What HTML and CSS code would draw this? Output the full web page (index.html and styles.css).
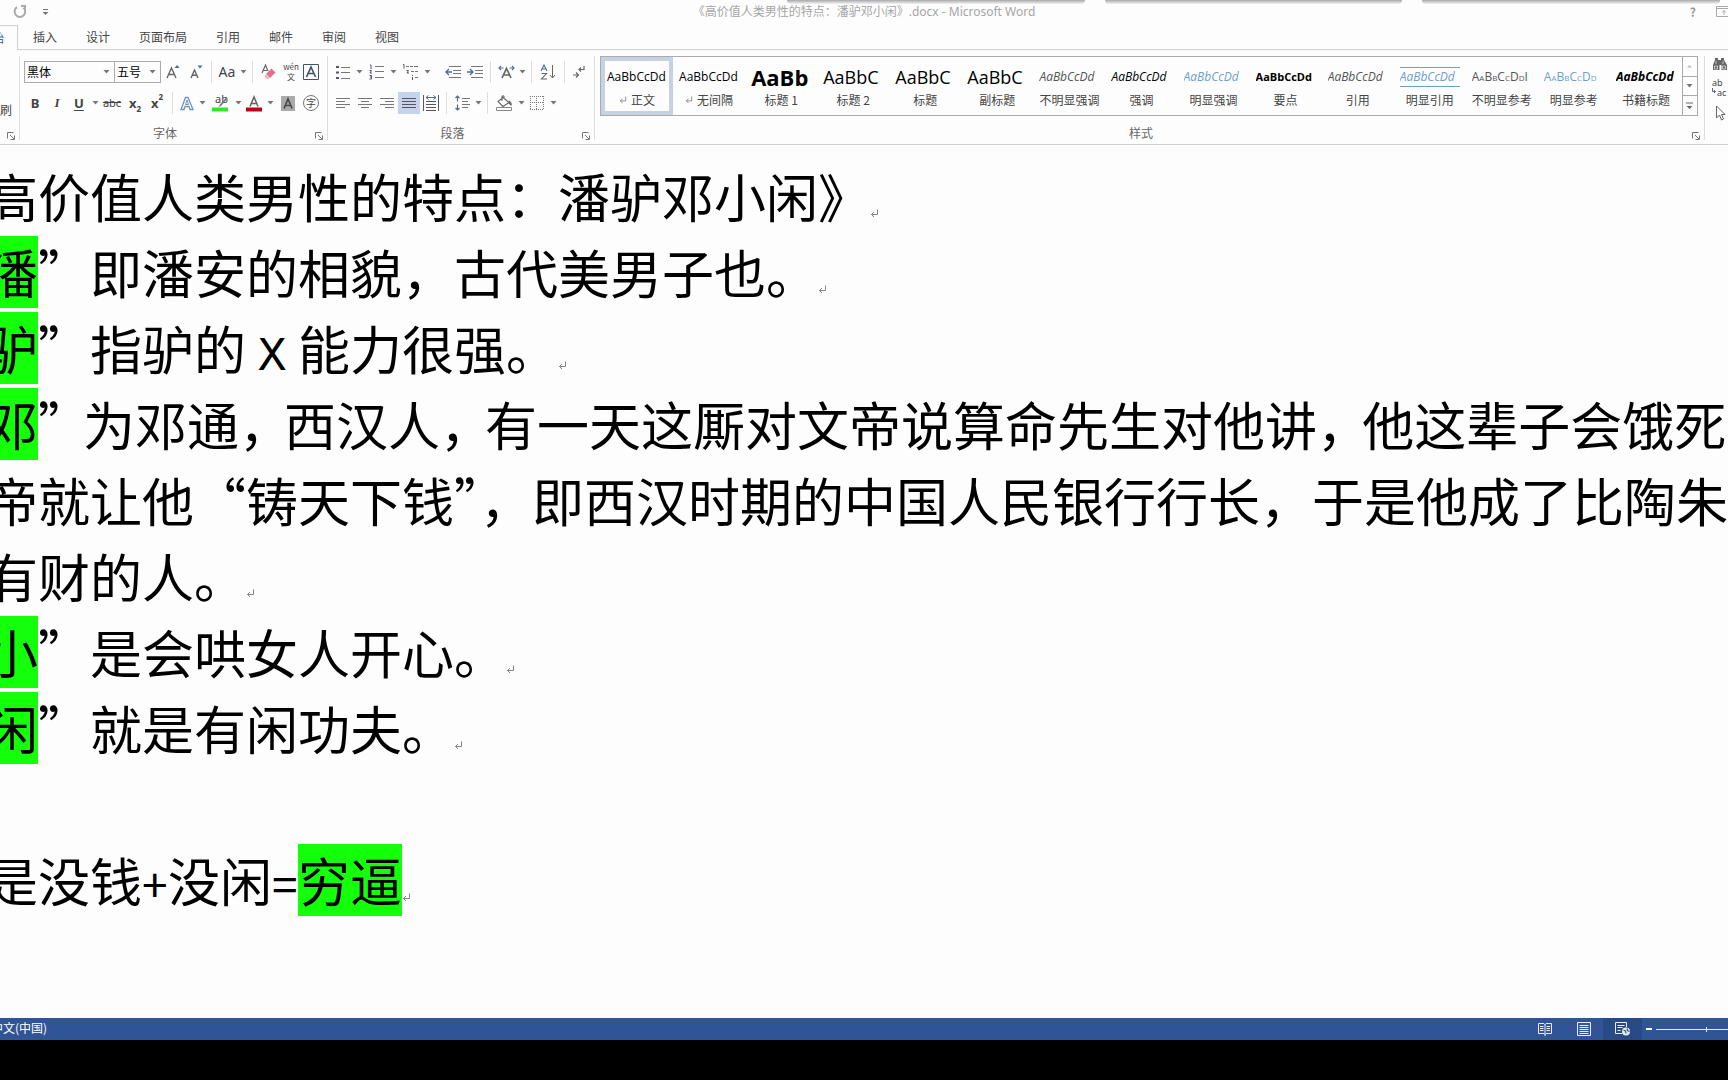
FILE: index.html
```html
<!DOCTYPE html>
<html lang="zh-CN">
<head>
<meta charset="utf-8">
<title>《高价值人类男性的特点：潘驴邓小闲》.docx - Microsoft Word</title>
<link rel="stylesheet" href="styles.css">
</head>
<body>
<svg class="defs" aria-hidden="true">
  <symbol id="caret" viewBox="0 0 7 4"><path d="M0.5 0h6L3.5 3.5z" fill="#777"/></symbol>
  <symbol id="launcher" viewBox="0 0 8 8"><path d="M0.5 6.500V.5H6.500M3 3l4 4M7.500 3.500v4h-4" fill="none" stroke="#777"/></symbol>
  <symbol id="enter" viewBox="0 0 9 9"><path d="M7.500 .5V5.500H1.500M4 3L1.500 5.500L4 8" fill="none" stroke="#777" stroke-width=".9"/></symbol>
</svg>

<header class="titlebar">
  <div class="edges"><i></i><i></i><i></i></div>
  <div class="quick">
    <button aria-label="重复"><svg width="16" height="16" viewBox="0 0 16 16"><path d="M5 3.200A5.300 5.300 0 1 0 11.500 3.700" fill="none" stroke="#aaa" stroke-width="2"/><path d="M9 1h5v5h-2V3H9z" fill="#aaa"/></svg></button>
    <button aria-label="自定义快速访问工具栏"><svg width="7" height="8" viewBox="0 0 7 8"><path d="M1 1.500h5" stroke="#777"/><path d="M.5 4h6L3.500 7z" fill="#777"/></svg></button>
  </div>
  <h1 class="title">《高价值人类男性的特点：潘驴邓小闲》.docx - Microsoft Word</h1>
  <div class="window-tools">
    <button aria-label="帮助">?</button>
    <button aria-label="功能区显示选项"><svg width="16" height="11" viewBox="0 0 16 11"><path d="M.5 .5h15v10H.5zM.5 2.500h15M8 9V4.500M6 6.500l2-2 2 2" fill="none" stroke="#aaa"/></svg></button>
  </div>
</header>

<nav class="tabs">
  <a href="#" class="tab active">始</a>
  <a href="#" class="tab">插入</a>
  <a href="#" class="tab">设计</a>
  <a href="#" class="tab">页面布局</a>
  <a href="#" class="tab">引用</a>
  <a href="#" class="tab">邮件</a>
  <a href="#" class="tab">审阅</a>
  <a href="#" class="tab">视图</a>
</nav>

<section class="ribbon" aria-label="功能区">
  <div class="group clipboard">
    <button class="painter">刷</button>
    <button class="launch" aria-label="剪贴板选项"><svg width="8" height="8"><use href="#launcher"/></svg></button>
  </div>

  <div class="group font">
    <div class="row">
      <div class="combo wide"><select aria-label="字体"><option>黑体</option></select><svg width="7" height="4"><use href="#caret"/></svg></div>
      <div class="combo narrow"><select aria-label="字号"><option>五号</option></select><svg width="7" height="4"><use href="#caret"/></svg></div>
      <button class="w24" aria-label="增大字号"><svg width="14" height="16" viewBox="0 0 14 16"><path d="M1 14L5.500 4L10 14M2.500 10.500h6" fill="none" stroke="#666" stroke-width="1.400"/><path d="M8.500 4L11 1L13.500 4z" fill="#4a6a9a"/></svg></button>
      <button class="w22" aria-label="减小字号"><svg width="14" height="16" viewBox="0 0 14 16"><path d="M2 14L5.500 6L9 14M3.200 11.200h4.600" fill="none" stroke="#666" stroke-width="1.400"/><path d="M8.500 1.500h5L11 4.500z" fill="#4a6a9a"/></svg></button>
      <span class="sep"></span>
      <button class="w22 case">Aa</button>
      <button class="w10" aria-label="更改大小写选项"><svg width="7" height="4"><use href="#caret"/></svg></button>
      <span class="sep"></span>
      <button class="w24" aria-label="清除格式"><svg width="16" height="16" viewBox="0 0 16 16"><path d="M1 9L4.500 1L7 7M2 6.500h4" fill="none" stroke="#666" stroke-width="1.200"/><path d="M10.500 4.500L14.500 8.500L9 14L5 10z" fill="#e0708c"/><path d="M4.500 10.500L8.500 14.500L6 15L3.500 12.500z" fill="#f0a6b8"/></svg></button>
      <button class="w20 ruby" aria-label="拼音指南"><span>wén</span><span>文</span></button>
      <button class="w20" aria-label="字符边框"><svg width="16" height="16" viewBox="0 0 16 16"><path d="M.5 .5h15v15H.5z" fill="none" stroke="#44546e"/><path d="M3.500 13L8 3L12.500 13M5 9.500h6" fill="none" stroke="#44546e" stroke-width="1.700"/></svg></button>
    </div>
    <div class="row">
      <button class="w22 glyph bold">B</button>
      <button class="w22 glyph italic">I</button>
      <button class="w22 glyph under">U</button>
      <button class="w10" aria-label="下划线选项"><svg width="7" height="4"><use href="#caret"/></svg></button>
      <button class="w24 strike">abc</button>
      <button class="w22 glyph script">x<sub>2</sub></button>
      <button class="w22 glyph script">x<sup>2</sup></button>
      <span class="sep"></span>
      <button class="w20" aria-label="文本效果"><svg width="14" height="15" viewBox="0 0 14 15"><path d="M1 13.500L5.500 1.500h2.500L13 13.500h-3L9 10.500H5L4 13.500z" fill="#fff" stroke="#6f93bf" stroke-width="1.300"/><path d="M5.500 8.500L7 4L8.500 8.500z" fill="none" stroke="#6f93bf"/></svg></button>
      <button class="w10" aria-label="文本效果选项"><svg width="7" height="4"><use href="#caret"/></svg></button>
      <button class="w26 ink" aria-label="突出显示"><span>ab</span><svg width="18" height="17" viewBox="0 0 18 17"><path d="M15.500 2L9 9.500L7.500 12L10 11L16.500 3.500z" fill="#777"/><path d="M1 12.500h16v4H1z" fill="#2be82b"/></svg></button>
      <button class="w10" aria-label="突出显示选项"><svg width="7" height="4"><use href="#caret"/></svg></button>
      <button class="w22" aria-label="字体颜色"><svg width="16" height="17" viewBox="0 0 16 17"><path d="M4 11.500L8 2L12 11.500M5.500 8.500h5" fill="none" stroke="#666" stroke-width="1.600"/><path d="M0 12.500h16v4H0z" fill="#c0001a"/></svg></button>
      <button class="w10" aria-label="字体颜色选项"><svg width="7" height="4"><use href="#caret"/></svg></button>
      <button class="w26" aria-label="字符底纹"><svg width="14" height="15" viewBox="0 0 14 15"><path d="M0 0h14v15H0z" fill="#aaa"/><path d="M3 12.500L7 3L11 12.500M4.500 9.500h5" fill="none" stroke="#4a4a4a" stroke-width="1.700"/></svg></button>
      <button class="w20" aria-label="带圈字符"><span class="circled">字</span></button>
    </div>
    <div class="caption">字体</div>
    <button class="launch" aria-label="字体选项"><svg width="8" height="8"><use href="#launcher"/></svg></button>
  </div>

  <div class="group para">
    <div class="row">
      <button class="w22" aria-label="项目符号"><svg width="14" height="15" viewBox="0 0 14 15"><path d="M0 1h3v2H0zM0 6.500h3v2H0zM0 12h3v2H0z" fill="#556"/><path d="M5 2.500h9M5 7.500h9M5 13.500h9" stroke="#777"/></svg></button>
      <button class="w10" aria-label="项目符号选项"><svg width="7" height="4"><use href="#caret"/></svg></button>
      <button class="w24" aria-label="编号"><svg width="15" height="16" viewBox="0 0 15 16"><path d="M1 1h1v4M.5 6.500h2L1 9h2M.5 11.500h2v3.500h-2M1 13h1" fill="none" stroke="#556"/><path d="M6 2.500h9M6 7.500h9M6 13.500h9" stroke="#777"/></svg></button>
      <button class="w10" aria-label="编号选项"><svg width="7" height="4"><use href="#caret"/></svg></button>
      <button class="w24" aria-label="多级列表"><svg width="17" height="16" viewBox="0 0 17 16"><path d="M1 .5h1v4M4.500 6.500h2L5 9h2M10.500 11v1M10.500 13v3" fill="none" stroke="#556"/><path d="M4 2.500h3M8 2.500h3M12 2.500h4M9 7.500h3M13 7.500h3M13 13.500h3" stroke="#777"/></svg></button>
      <button class="w10" aria-label="多级列表选项"><svg width="7" height="4"><use href="#caret"/></svg></button>
      <span class="gap"></span>
      <button class="w22" aria-label="减少缩进量"><svg width="16" height="14" viewBox="0 0 16 14"><path d="M4 1.500h12M8 5.500h8M8 8.500h8M4 12.500h12" stroke="#777"/><path d="M7 7H1M4 4L1 7l3 3" fill="none" stroke="#556a8c" stroke-width="1.400"/></svg></button>
      <button class="w22" aria-label="增加缩进量"><svg width="16" height="14" viewBox="0 0 16 14"><path d="M4 1.500h12M8 5.500h8M8 8.500h8M4 12.500h12" stroke="#777"/><path d="M0 7h6M3 4l3 3-3 3" fill="none" stroke="#556a8c" stroke-width="1.400"/></svg></button>
      <span class="sep"></span>
      <button class="w22" aria-label="中文版式"><svg width="17" height="14" viewBox="0 0 17 14"><path d="M4 13L8.500 3.500L13 13M5.500 10h6" fill="none" stroke="#666" stroke-width="1.700"/><path d="M5.500 3H1M3 .8L1 3l2 2.200M11.500 3H16M14 .8L16 3l-2 2.200" fill="none" stroke="#556a8c" stroke-width="1.100"/></svg></button>
      <button class="w10" aria-label="中文版式选项"><svg width="7" height="4"><use href="#caret"/></svg></button>
      <span class="sep"></span>
      <button class="w24" aria-label="排序"><svg width="16" height="16" viewBox="0 0 16 16"><path d="M1 7L4 1l3 6M2 5h4" fill="none" stroke="#556a8c" stroke-width="1.100"/><path d="M1.500 9.500h5L1.500 15h5.500" fill="none" stroke="#666" stroke-width="1.100"/><path d="M12.500 1v13M10 11l2.500 3L15 11" fill="none" stroke="#666"/></svg></button>
      <span class="sep"></span>
      <button class="w20" aria-label="显示编辑标记"><svg width="12" height="13" viewBox="0 0 12 13"><path d="M11 0v3.500H6M8 1.500L6 3.500l2 2M0 9h5M3 6.500L5.500 9L3 11.500" fill="none" stroke="#666" stroke-width="1.200"/></svg></button>
    </div>
    <div class="row">
      <button class="w22" aria-label="左对齐"><svg width="14" height="12" viewBox="0 0 14 12"><path d="M0 1.500h14M0 4.500h9M0 7.500h14M0 10.500h9" stroke="#777"/></svg></button>
      <button class="w22" aria-label="居中"><svg width="14" height="12" viewBox="0 0 14 12"><path d="M0 1.500h14M3 4.500h8M0 7.500h14M3 10.500h8" stroke="#777"/></svg></button>
      <button class="w22" aria-label="右对齐"><svg width="14" height="12" viewBox="0 0 14 12"><path d="M0 1.500h14M5 4.500h9M0 7.500h14M5 10.500h9" stroke="#777"/></svg></button>
      <button class="w22 pressed" aria-label="两端对齐"><svg width="14" height="12" viewBox="0 0 14 12"><path d="M0 1.500h14M0 4.500h14M0 7.500h14M0 10.500h14" stroke="#556"/></svg></button>
      <button class="w22" aria-label="分散对齐"><svg width="16" height="16" viewBox="0 0 16 16"><path d="M.5 0v16M15.500 0v16M3 6.500h10M3 9.500h10M3 12.500h10M3 15.500h10" stroke="#556"/><path d="M3 2.500h10M5.500 .5L3 2.500l2.500 2M10.500 .5L13 2.500l-2.500 2" fill="none" stroke="#556a8c"/></svg></button>
      <span class="sep"></span>
      <button class="w22" aria-label="行距"><svg width="15" height="16" viewBox="0 0 15 16"><path d="M7 3.500h8M7 6.500h6M7 9.500h8M7 12.500h6" stroke="#777"/><path d="M2.500 1v5.500M.5 3L2.500 1l2 2M2.500 9.500V15M.5 13l2 2 2-2" fill="none" stroke="#556a8c" stroke-width="1.200"/></svg></button>
      <button class="w10" aria-label="行距选项"><svg width="7" height="4"><use href="#caret"/></svg></button>
      <span class="sep"></span>
      <button class="w24" aria-label="底纹"><svg width="17" height="16" viewBox="0 0 17 16"><path d="M7 2.500l6 5-6 4-5-5zM6 6V1.500q1.500-1.500 2 0V4M13 6q3 2 2 4l-2-2" fill="none" stroke="#666" stroke-width="1.100"/><path d="M.5 12.500h15v3H.5z" fill="#fff" stroke="#888"/></svg></button>
      <button class="w10" aria-label="底纹选项"><svg width="7" height="4"><use href="#caret"/></svg></button>
      <button class="w22" aria-label="边框"><svg width="14" height="14" viewBox="0 0 14 14"><path d="M0 .5h14M0 6.500h14M0 13.500h14M.5 0v14M6.500 0v14M13.500 0v14" stroke="#777" stroke-dasharray="1 1"/></svg></button>
      <button class="w10" aria-label="边框选项"><svg width="7" height="4"><use href="#caret"/></svg></button>
    </div>
    <div class="caption">段落</div>
    <button class="launch" aria-label="段落选项"><svg width="8" height="8"><use href="#launcher"/></svg></button>
  </div>

  <div class="group styles">
    <div class="gallery">
      <button class="style selected"><span class="sample">AaBbCcDd</span><span class="name"><svg width="8" height="8"><use href="#enter"/></svg>正文</span></button>
      <button class="style"><span class="sample">AaBbCcDd</span><span class="name"><svg width="8" height="8"><use href="#enter"/></svg>无间隔</span></button>
      <button class="style"><span class="sample huge">AaBb</span><span class="name">标题 1</span></button>
      <button class="style"><span class="sample large">AaBbC</span><span class="name">标题 2</span></button>
      <button class="style"><span class="sample large">AaBbC</span><span class="name">标题</span></button>
      <button class="style"><span class="sample large">AaBbC</span><span class="name">副标题</span></button>
      <button class="style"><span class="sample slant soft">AaBbCcDd</span><span class="name">不明显强调</span></button>
      <button class="style"><span class="sample slant">AaBbCcDd</span><span class="name">强调</span></button>
      <button class="style"><span class="sample slant blue">AaBbCcDd</span><span class="name">明显强调</span></button>
      <button class="style"><span class="sample strong">AaBbCcDd</span><span class="name">要点</span></button>
      <button class="style"><span class="sample slant soft">AaBbCcDd</span><span class="name">引用</span></button>
      <button class="style"><span class="sample slant blue lined">AaBbCcDd</span><span class="name">明显引用</span></button>
      <button class="style"><span class="sample caps soft">AaBbCcDdI</span><span class="name">不明显参考</span></button>
      <button class="style"><span class="sample caps blue">AaBbCcDd</span><span class="name">明显参考</span></button>
      <button class="style"><span class="sample title-strong">AaBbCcDd</span><span class="name">书籍标题</span></button>
      <div class="scroller">
        <button aria-label="上一行"><svg width="5" height="4" viewBox="0 0 5 4"><path d="M0 3.500h5L2.500 1z" fill="#bbb"/></svg></button>
        <button aria-label="下一行"><svg width="7" height="4"><use href="#caret"/></svg></button>
        <button aria-label="其他"><svg width="7" height="8" viewBox="0 0 7 8"><path d="M0 1h7" stroke="#666"/><path d="M.5 4h6L3.500 7z" fill="#666"/></svg></button>
      </div>
    </div>
    <div class="caption">样式</div>
    <button class="launch" aria-label="样式选项"><svg width="8" height="8"><use href="#launcher"/></svg></button>
  </div>

  <div class="group editing">
    <button aria-label="查找"><svg width="16" height="14" viewBox="0 0 16 14"><path d="M3 1h3v2h3V1h3v2l3 5v5h-5.500V8h-2v5H1V8L3 3z" fill="#666"/><path d="M2.500 9h3v3h-3zM10.500 9h3v3h-3zM4 4v3M11 4v3" fill="none" stroke="#ddd" stroke-width=".8"/></svg></button>
    <button class="replace" aria-label="替换"><span>ab</span><span class="to"><svg width="4" height="6" viewBox="0 0 4 6"><path d="M.5 0v3.500h3M2 2l1.500 1.500L2 5" fill="none" stroke="#556a8c"/></svg>ac</span></button>
    <button aria-label="选择"><svg width="16" height="16" viewBox="0 0 16 16"><path d="M4.500 1v12l3-3 2 5 2-1-2-4.500h3.500z" fill="#fff" stroke="#666"/></svg></button>
  </div>
</section>

<main class="document">
  <article class="page">
    <p>高价值人类男性的特点：潘驴邓小闲》<svg class="mark-end"><use href="#enter"/></svg></p>
    <p><mark>潘</mark>”即潘安的相貌，古代美男子也。<svg class="mark-end"><use href="#enter"/></svg></p>
    <p><mark>驴</mark>”指驴的<span class="letter">X</span>能力很强。<svg class="mark-end"><use href="#enter"/></svg></p>
    <p><mark>邓</mark><span class="tight">”</span>为邓通<span class="tight">，</span>西汉人<span class="tight">，</span>有一天这厮对文帝说算命先生对他讲<span class="tight">，</span>他这辈子会饿死<br>帝就让他“铸天下钱”，即西汉时期的中国人民银行行长，于是他成了比陶朱<br>有财的人。<svg class="mark-end"><use href="#enter"/></svg></p>
    <p><mark>小</mark>”是会哄女人开心。<svg class="mark-end"><use href="#enter"/></svg></p>
    <p><mark>闲</mark>”就是有闲功夫。<svg class="mark-end"><use href="#enter"/></svg></p>
    <p><br></p>
    <p>是没钱<span class="sign">+</span>没闲<span class="sign">=</span><mark>穷逼</mark><svg class="mark-end"><use href="#enter"/></svg></p>
  </article>
</main>

<footer class="statusbar">
  <span class="language">中文(中国)</span>
  <div class="views">
    <button aria-label="阅读视图"><svg width="14" height="14" viewBox="0 0 14 14"><path d="M.5 1.500h5.500l1 1 1-1h5.500v10H8l-1 1-1-1H.5zM7 2v12M2 4.500h3.500M2 6.500h3.500M2 8.500h3.500M8.500 4.500H12M8.500 6.500H12M8.500 8.500H12" fill="none" stroke="#e6edf7"/></svg></button>
    <button aria-label="页面视图"><svg width="14" height="14" viewBox="0 0 14 14"><path d="M.5 .5h13v13H.5zM2.500 3.500h9M2.500 5.500h9M2.500 7.500h9M2.500 9.500h9M2.500 11.500h9" fill="none" stroke="#e6edf7"/></svg></button>
    <button class="current" aria-label="Web 版式视图"><svg width="16" height="14" viewBox="0 0 16 14"><path d="M7 11.500H.5V.5h11V5M2.500 3.500h7M2.500 5.500h5M2.500 8.500h3" fill="none" stroke="#e6edf7"/><circle cx="11" cy="9.500" r="4" fill="#e6edf7"/><path d="M8.500 8l2 1 .5 2.500M12 6.500l.5 2 2 1" fill="none" stroke="#2b579a" stroke-width="1.200"/></svg></button>
  </div>
  <button class="minus" aria-label="缩小"></button>
  <input class="zoom" type="range" min="10" max="190" value="190" aria-label="显示比例">
</footer>
<div class="letterbox"></div>
</body>
</html>
```
FILE: styles.css
```css
* { box-sizing: border-box; }

body {
  display: flex;
  flex-direction: column;
  min-height: 100vh;
  margin: 0;
  overflow: hidden;
  background: #fdfdfd;
  color: #444;
  font: 12px/18px "Noto Sans CJK SC", "Noto Sans", sans-serif;
}

button {
  display: flex;
  align-items: center;
  justify-content: center;
  flex: none;
  padding: 0;
  border: 0;
  background: none;
  color: inherit;
  font: inherit;
}

svg { flex: none; }

.defs { position: absolute; width: 0; height: 0; }

/* Title bar */
.titlebar {
  position: relative;
  display: grid;
  grid-template-columns: 1fr auto 1fr;
  align-items: center;
  height: 25px;
  padding-bottom: 2px;
}

.edges {
  position: absolute;
  top: 0;
  right: 8px;
  display: flex;
  gap: 20px;
  width: 54%;
  height: 4px;
}

.edges i {
  flex: 1;
  border-radius: 0 0 6px 6px;
  background: linear-gradient(#a8a8ac, #f4f4f4);
}

.quick { display: flex; gap: 14px; padding-left: 12px; }

.title {
  margin: 0;
  color: #a6a6a6;
  font: 12px/18px "Noto Sans", "Noto Sans CJK SC", sans-serif;
}

.window-tools {
  display: flex;
  justify-content: flex-end;
  gap: 20px;
  margin-right: -4px;
  color: #999;
  font-weight: 700;
}

/* Tabs */
.tabs {
  display: flex;
  height: 25px;
  border-bottom: 1px solid #d0d0d2;
}

.tab {
  height: 24px;
  margin-left: 29px;
  color: #444;
  line-height: 23px;
  text-decoration: none;
}

.tab.active {
  width: 18px;
  height: 25px;
  margin: 0 -14px 0 0;
  border: solid #d0d0d2;
  border-width: 1px 1px 0 0;
  background: #fdfdfd;
  color: #2b579a;
  text-indent: -8px;
}

/* Ribbon */
.ribbon {
  display: flex;
  height: 95px;
  border-bottom: 1px solid #d0d0d2;
}

.group {
  position: relative;
  display: flex;
  flex: none;
  flex-direction: column;
  gap: 9px;
  padding: 11px 4px 0;
}

.group::after {
  content: "";
  position: absolute;
  top: 6px;
  right: 0;
  bottom: 4px;
  width: 1px;
  background: #dedee0;
}

.clipboard { width: 20px; }
.font { width: 308px; }
.para { width: 267px; }
.styles { flex: 1; padding: 6px 7px 0 5px; }
.editing { width: 23px; align-items: flex-start; gap: 7px; padding: 7px 0 0 7px; }
.editing::after { display: none; }

.painter { margin: 40px 0 0 -8px; }

.row { display: flex; height: 22px; }
.row button { height: 22px; }

.caption {
  position: absolute;
  right: 18px;
  bottom: 2px;
  left: 0;
  color: #666;
  text-align: center;
}

.launch { position: absolute; right: 5px; bottom: 4px; }

.w10 { width: 10px; }
.w20 { width: 20px; }
.w22 { width: 22px; }
.w24 { width: 24px; }
.w26 { width: 26px; }

.sep { width: 1px; margin: 0 4px; background: #dedee0; }
.gap { width: 10px; }
.pressed { background: #c5d3ec; }

.combo {
  display: flex;
  align-items: center;
  height: 22px;
  padding-right: 4px;
  border: 1px solid #ababab;
}

.combo.wide { width: 91px; }
.combo.narrow { width: 47px; margin-left: -1px; }

.combo select {
  flex: 1;
  min-width: 0;
  padding: 0 2px;
  border: 0;
  appearance: none;
  background: none;
  color: #000;
  font: inherit;
}

.case { font: 14px/20px "Noto Sans", sans-serif; }

.ruby { flex-direction: column; font-size: 8px; line-height: 10px; }

.glyph { font: 13px/20px "Noto Sans", sans-serif; }
.bold { font-weight: 700; }
.italic { font-family: "Liberation Serif", serif; font-style: italic; font-weight: 700; }
.under { font-weight: 700; text-decoration: underline; text-underline-offset: 2px; }
.strike { font: 11px/20px "Noto Sans", sans-serif; text-decoration: line-through; }
.script { font-weight: 700; }
.script sub, .script sup { font-size: 8px; line-height: 10px; }
.script sub { align-self: flex-end; }
.script sup { align-self: flex-start; }

.ink { display: grid; place-items: center; }
.ink > * { grid-area: 1 / 1; }
.ink span { align-self: start; justify-self: start; padding-left: 4px; font: 11px/14px "Noto Sans", sans-serif; }

.circled {
  width: 16px;
  height: 16px;
  border: 1px solid #777;
  border-radius: 50%;
  font-size: 10px;
  line-height: 14px;
}

/* Style gallery */
.gallery {
  display: flex;
  height: 60px;
  border: 1px solid #ababab;
}

.style {
  flex: 1;
  flex-direction: column;
  justify-content: flex-start;
  min-width: 0;
  padding-top: 4px;
}

.style.selected { box-shadow: inset 0 0 0 4px #c6d2e4; }

.sample {
  width: 60px;
  height: 30px;
  overflow: hidden;
  color: #000;
  font: 12px/32px "Open Sans", sans-serif;
  text-align: left;
  white-space: nowrap;
}

.sample.large { font-size: 18px; }
.sample.huge { font-size: 22px; font-weight: 700; }
.sample.slant { font-style: italic; }
.sample.strong { font-size: 11px; font-weight: 700; }
.sample.title-strong { font-style: italic; font-weight: 700; }
.sample.soft { color: #555; }
.sample.blue { color: #6f9fcb; }
.sample.caps { font-variant: small-caps; }

.sample.lined {
  height: 20px;
  margin: 6px 0 4px;
  border: solid #6f9fcb;
  border-width: 1px 0;
  line-height: 18px;
}

.name {
  display: flex;
  align-items: center;
  gap: 4px;
  line-height: 18px;
  white-space: nowrap;
}

.scroller {
  display: flex;
  flex-direction: column;
  width: 15px;
  border-left: 1px solid #ababab;
}

.scroller button { flex: 1; }
.scroller button + button { border-top: 1px solid #ababab; }

.replace {
  flex-direction: column;
  align-items: flex-start;
  font: 9px/10px "Noto Sans", sans-serif;
}

.replace .to { display: flex; gap: 1px; }

/* Document */
.document {
  flex: 1;
  padding-top: 13px;
  overflow: hidden;
}

.page {
  margin-left: -14px;
  color: #000;
  font-size: 52px;
  line-height: 76px;
  white-space: nowrap;
}

.page p { margin: 0; }

.page mark {
  display: inline-block;
  height: 72px;
  margin-top: 2px;
  background: #14ff0a;
  color: #000;
  line-height: 72px;
  vertical-align: top;
}

.mark-end { width: 9px; height: 9px; }
.tight { margin-right: -7px; }

.letter {
  display: inline-block;
  width: 52px;
  font-family: "Liberation Mono", monospace;
  font-size: 48px;
  line-height: 52px;
  text-align: center;
}

.sign { display: inline-block; width: 26px; font-size: 46px; line-height: 52px; }

/* Status bar */
.statusbar {
  display: flex;
  align-items: center;
  height: 22px;
  overflow: hidden;
  background: #2f5597;
  color: #fff;
}

.language { height: 20px; margin-left: -9px; }
.views { display: flex; margin-left: auto; }
.views button { width: 39px; height: 22px; }
.views .current { background: #284b87; }
.minus { width: 6px; height: 2px; margin: 0 4px; background: #fff; }

.zoom {
  flex: none;
  width: 100px;
  height: 22px;
  margin: 0 -28px 0 0;
  appearance: none;
  background:
    linear-gradient(#e6edf7, #e6edf7) 50px center / 1px 5px no-repeat,
    linear-gradient(#e6edf7, #e6edf7) center / 100% 1px no-repeat;
}

.zoom::-webkit-slider-thumb {
  width: 4px;
  height: 10px;
  appearance: none;
  background: #fff;
}

.letterbox { height: 40px; background: #000; }
```
